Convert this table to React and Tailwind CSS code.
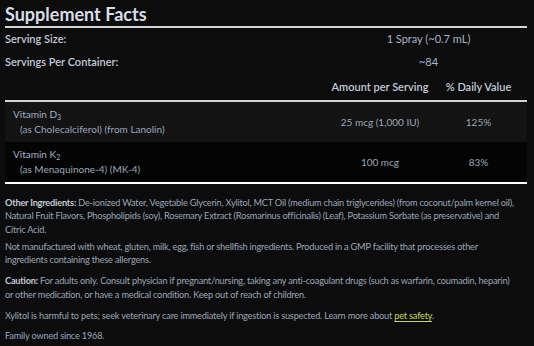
const rows = [
  { name: 'Vitamin D', sub: '3', source: '(as Cholecalciferol) (from Lanolin)', amount: '25 mcg (1,000 IU)', dv: '125%', bg: 'bg-[#131313]' },
  { name: 'Vitamin K', sub: '2', source: '(as Menaquinone-4) (MK-4)', amount: '100 mcg', dv: '83%', bg: 'bg-[#040404]' },
];

export default function App() {
  return (
    <div className="w-[534px] h-[346px] bg-[#0c0c0c] text-[#9ba6b8] px-[5px] pt-[2px] overflow-hidden font-['Lato',sans-serif]">
      <h1 className="text-[18px] font-bold text-[#d9dee6] leading-[24px]">Supplement Facts</h1>
      <div className="h-[2px] bg-[#d4d4d4] w-[522px]" />

      <div className="w-[522px] text-[11px]">
        <div className="grid grid-cols-[325px_197px] h-[22px] items-center">
          <span className="font-semibold text-[#c3cad6]">Serving Size:</span>
          <span className="text-center text-[#a8b4ca]">1 Spray (~0.7 mL)</span>
        </div>
        <div className="grid grid-cols-[325px_197px] h-[25px] items-center">
          <span className="font-semibold text-[#c3cad6]">Servings Per Container:</span>
          <span className="text-center text-[#a8b4ca]">~84</span>
        </div>
        <div className="grid grid-cols-[325px_100px_97px] h-[25px] items-center">
          <span />
          <span className="text-center font-semibold text-[#c3cad6]">Amount per Serving</span>
          <span className="text-center font-semibold text-[#c3cad6]">% Daily Value</span>
        </div>
        <div className="h-[2px] bg-[#d4d4d4]" />

        {rows.map((r) => (
          <div key={r.name} className={`grid grid-cols-[325px_100px_97px] h-[40px] items-center ${r.bg}`}>
            <div className="pl-[8px] text-[10px] leading-[15px]">
              <div className="text-[#a4b0c6]">
                {r.name}
                <sub className="text-[7px]">{r.sub}</sub>
              </div>
              <div className="pl-[7px] text-[#9ba6b8]">{r.source}</div>
            </div>
            <span className="text-center text-[10px] text-[#9ba6b8]">{r.amount}</span>
            <span className="text-center text-[10px] text-[#9ba6b8]">{r.dv}</span>
          </div>
        ))}
        <div className="h-[2px] bg-white" />
      </div>

      <div className="text-[9.2px] leading-[13.3px] tracking-[-0.2px] pt-[12px] w-[524px]">
        <p>
          <span className="font-bold text-[#c3cad6]">Other Ingredients:</span> De-ionized Water, Vegetable Glycerin, Xylitol, MCT Oil (medium chain triglycerides) (from coconut/palm kernel oil),<br />
          Natural Fruit Flavors, Phospholipids (soy), Rosemary Extract (Rosmarinus officinalis) (Leaf), Potassium Sorbate (as preservative) and<br />
          Citric Acid.
        </p>
        <p className="mt-[4px]">
          Not manufactured with wheat, gluten, milk, egg, fish or shellfish ingredients. Produced in a GMP facility that processes other<br />
          ingredients containing these allergens.
        </p>
        <p className="mt-[8px]">
          <span className="font-bold text-[#c3cad6]">Caution:</span> For adults only. Consult physician if pregnant/nursing, taking any anti-coagulant drugs (such as warfarin, coumadin, heparin)<br />
          or other medication, or have a medical condition. Keep out of reach of children.
        </p>
        <p className="mt-[8px]">
          Xylitol is harmful to pets; seek veterinary care immediately if ingestion is suspected. Learn more about{' '}
          <a className="text-[#c6dc4a] underline underline-offset-2">pet safety</a>.
        </p>
        <p className="mt-[7px]">Family owned since 1968.</p>
      </div>
    </div>
  );
}
